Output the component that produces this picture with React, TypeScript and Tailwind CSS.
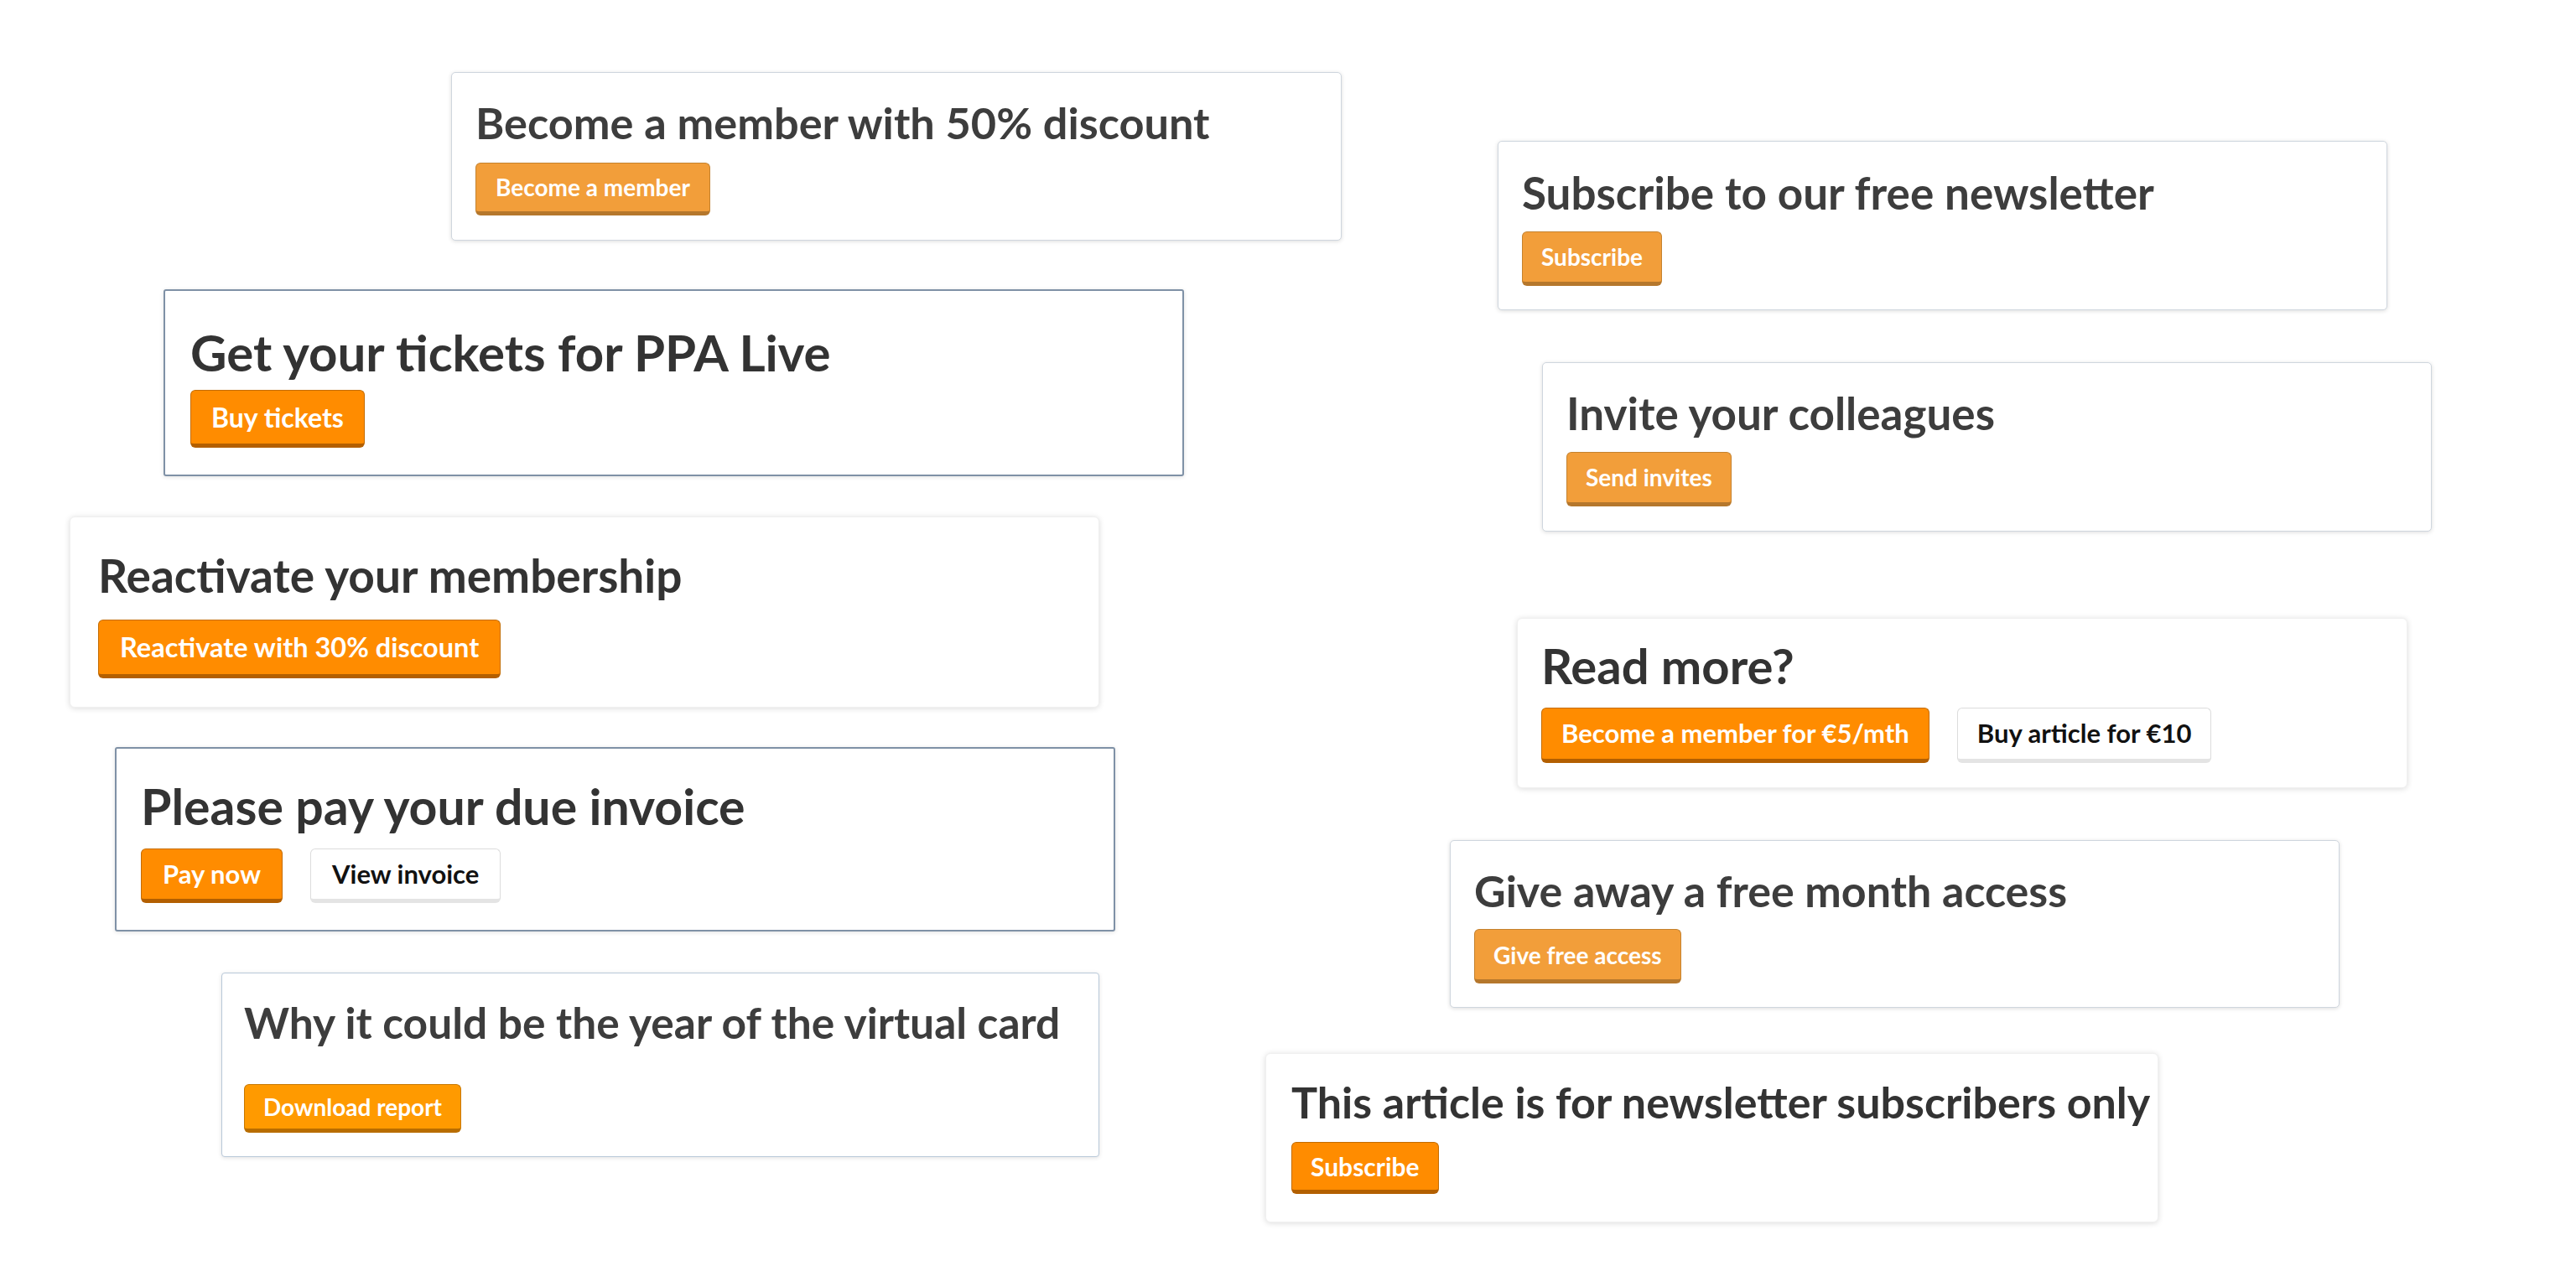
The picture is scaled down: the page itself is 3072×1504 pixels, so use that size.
type Btn = { label: string; cls: string };
type Card = { pos: string; frame: string; title: string; titleCls: string; btns: Btn[] };

const light = 'bg-[#f29e3a] border border-[#c4822f] border-b-[5px] border-b-[#b5772c] text-white';
const bright = 'bg-[#ff8c00] border border-[#c46c00] border-b-[5px] border-b-[#b35f00] text-white';
const amber = 'bg-[#ff9a00] border border-[#c77800] border-b-[5px] border-b-[#b86d00] text-white';
const plain = 'bg-white border border-[#dcdcdc] border-b-[5px] border-b-[#e4e4e4] text-[#111]';

const frameA = 'border border-[#cfd6de] rounded-[5px] shadow-[0_1px_5px_rgba(0,0,0,0.14)]';
const frameB = 'border-2 border-[#7f91a6] rounded-[3px] shadow-[0_1px_5px_rgba(0,0,0,0.12)]';
const frameC = 'border border-[#b9c9d9] rounded-[4px] shadow-[0_1px_5px_rgba(0,0,0,0.12)]';
const frameD = 'border border-[#f0f0f0] rounded-[6px] shadow-[0_1px_7px_rgba(0,0,0,0.14)]';

const cards: Card[] = [
  {
    pos: 'left-[538px] top-[86px] w-[1062px] pt-[28px] pb-[29px] px-[28px] gap-[16px]',
    frame: frameA,
    title: 'Become a member with 50% discount',
    titleCls: 'text-[52.3px] text-[#3d3d3d]',
    btns: [{ label: 'Become a member', cls: `${light} h-[63px] px-[23px] text-[28px]` }],
  },
  {
    pos: 'left-[195px] top-[345px] w-[1217px] pt-[37px] pb-[32px] px-[30px] gap-[9px]',
    frame: frameB,
    title: 'Get your tickets for PPA Live',
    titleCls: 'text-[60px] text-[#333333]',
    btns: [{ label: 'Buy tickets', cls: `${bright} h-[69px] px-[24px] text-[32px]` }],
  },
  {
    pos: 'left-[83px] top-[616px] w-[1228px] pt-[36px] pb-[34px] px-[33px] gap-[20px]',
    frame: frameD,
    title: 'Reactivate your membership',
    titleCls: 'text-[55px] text-[#333333]',
    btns: [{ label: 'Reactivate with 30% discount', cls: `${bright} h-[70px] px-[25px] text-[32.5px]` }],
  },
  {
    pos: 'left-[137px] top-[891px] w-[1193px] pt-[34px] pb-[32px] px-[29px] gap-[14px]',
    frame: frameB,
    title: 'Please pay your due invoice',
    titleCls: 'text-[59px] text-[#333333]',
    btns: [
      { label: 'Pay now', cls: `${bright} h-[65px] px-[25px] text-[31px]` },
      { label: 'View invoice', cls: `${plain} h-[65px] px-[25px] text-[31px]` },
    ],
  },
  {
    pos: 'left-[264px] top-[1160px] w-[1047px] pt-[28px] pb-[28px] px-[26px] gap-[42px]',
    frame: frameC,
    title: 'Why it could be the year of the virtual card',
    titleCls: 'text-[51.5px] text-[#3d3d3d]',
    btns: [{ label: 'Download report', cls: `${amber} h-[58px] px-[22px] text-[28px]` }],
  },
  {
    pos: 'left-[1786px] top-[168px] w-[1061px] pt-[29px] pb-[28px] px-[28px] gap-[14px]',
    frame: frameA,
    title: 'Subscribe to our free newsletter',
    titleCls: 'text-[53px] text-[#3d3d3d]',
    btns: [{ label: 'Subscribe', cls: `${light} h-[65px] px-[22px] text-[28px]` }],
  },
  {
    pos: 'left-[1839px] top-[432px] w-[1061px] pt-[28px] pb-[29px] px-[28px] gap-[14px]',
    frame: frameA,
    title: 'Invite your colleagues',
    titleCls: 'text-[53px] text-[#3d3d3d]',
    btns: [{ label: 'Send invites', cls: `${light} h-[65px] px-[22px] text-[28px]` }],
  },
  {
    pos: 'left-[1809px] top-[737px] w-[1062px] pt-[21px] pb-[29px] px-[28px] gap-[15px]',
    frame: frameD,
    title: 'Read more?',
    titleCls: 'text-[58px] text-[#333333]',
    btns: [
      { label: 'Become a member for €5/mth', cls: `${bright} h-[66px] px-[23px] text-[31px]` },
      { label: 'Buy article for €10', cls: `${plain} h-[66px] px-[23px] text-[31px]` },
    ],
  },
  {
    pos: 'left-[1729px] top-[1002px] w-[1061px] pt-[28px] pb-[28px] px-[28px] gap-[15px]',
    frame: frameA,
    title: 'Give away a free month access',
    titleCls: 'text-[52px] text-[#3d3d3d]',
    btns: [{ label: 'Give free access', cls: `${light} h-[65px] px-[22px] text-[28px]` }],
  },
  {
    pos: 'left-[1509px] top-[1256px] w-[1065px] pt-[26px] pb-[33px] px-[30px] gap-[17px]',
    frame: frameD,
    title: 'This article is for newsletter subscribers only',
    titleCls: 'text-[52px] text-[#333333]',
    btns: [{ label: 'Subscribe', cls: `${bright} h-[62px] px-[22px] text-[30px]` }],
  },
];

export default function App() {
  return (
    <div className="relative w-[3072px] h-[1504px] bg-white overflow-hidden font-['Lato',sans-serif] font-bold">
      {cards.map((c) => (
        <div key={c.title} className={`absolute flex flex-col items-start bg-white ${c.pos} ${c.frame}`}>
          <h2 className={`leading-[1.2] whitespace-nowrap ${c.titleCls}`}>{c.title}</h2>
          <div className="flex gap-[33px]">
            {c.btns.map((b) => (
              <button key={b.label} className={`flex items-center rounded-[6px] leading-none ${b.cls}`}>
                {b.label}
              </button>
            ))}
          </div>
        </div>
      ))}
    </div>
  );
}
